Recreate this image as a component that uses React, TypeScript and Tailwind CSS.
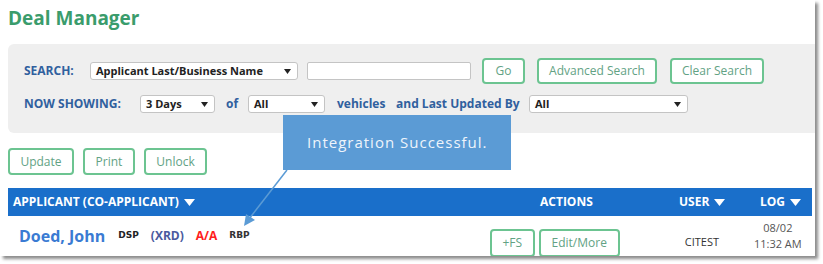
import React from "react";

const font = { fontFamily: '"Open Sans", "Noto Sans", sans-serif' };

function Sel({ w, label }: { w: string; label: string }) {
  return (
    <div
      className={`${w} h-[18px] bg-white border border-[#c4c4c4] rounded-[3px] flex items-center justify-between pl-[5px] pr-[6px] text-[11px] font-bold text-[#222]`}
    >
      <span>{label}</span>
      <svg width="7" height="5" viewBox="0 0 7 5">
        <polygon points="0,0 7,0 3.5,5" fill="#222" />
      </svg>
    </div>
  );
}

function Tri() {
  return (
    <svg width="11" height="7" viewBox="0 0 11 7">
      <polygon points="0,0 11,0 5.5,7" fill="#fff" />
    </svg>
  );
}

function Btn({ w, h = "h-[26px]", children }: { w: string; h?: string; children: React.ReactNode }) {
  return (
    <div
      className={`${w} ${h} border-2 border-[#6cc491] rounded-[4px] bg-white flex items-center justify-center text-[12px] text-[#62a284] shrink-0`}
    >
      {children}
    </div>
  );
}

export default function App() {
  return (
    <div className="w-[823px] h-[264px] bg-white overflow-hidden" style={font}>
      <div className="relative w-[815px] h-[256px] bg-white shadow-[3px_3px_3px_rgba(0,0,0,0.45)] overflow-hidden">
        <div className="pl-2 pt-[5px] text-[19px] font-bold text-[#3a9c6c] leading-[26px]">Deal Manager</div>

        <div className="ml-2 mt-[13px] h-[89px] bg-[#efefef] rounded-l-[6px] pl-4 pt-[14px]">
          <div className="flex items-center h-[26px]">
            <span className="w-[66px] text-[12px] font-bold text-[#30609e]">SEARCH:</span>
            <Sel w="w-[208px]" label="Applicant Last/Business Name" />
            <div className="ml-[9px] w-[164px] h-[18px] bg-white border border-[#c4c4c4] rounded-[2px]" />
            <div className="ml-[11px]">
              <Btn w="w-[43px]">Go</Btn>
            </div>
            <div className="ml-[12px]">
              <Btn w="w-[120px]">Advanced Search</Btn>
            </div>
            <div className="ml-[13px]">
              <Btn w="w-[94px]">Clear Search</Btn>
            </div>
          </div>
          <div className="flex items-center h-[18px] mt-[11px]">
            <span className="w-[116px] text-[12px] font-bold text-[#30609e]">NOW SHOWING:</span>
            <Sel w="w-[75px]" label="3 Days" />
            <span className="ml-[11px] w-[22px] text-[12px] font-bold text-[#30609e]">of</span>
            <Sel w="w-[77px]" label="All" />
            <span className="ml-[12px] w-[59px] text-[12px] font-bold text-[#30609e]">vehicles</span>
            <span className="w-[133px] text-[12px] font-bold text-[#30609e]">and Last Updated By</span>
            <Sel w="w-[159px]" label="All" />
          </div>
        </div>

        <div className="flex gap-[9px] ml-2 mt-[15px]">
          <Btn w="w-[66px]" h="h-[27px]">Update</Btn>
          <Btn w="w-[52px]" h="h-[27px]">Print</Btn>
          <Btn w="w-[63px]" h="h-[27px]">Unlock</Btn>
        </div>

        <div className="ml-2 mt-[13px] w-[804px] h-[28px] bg-[#1a6fca] flex items-center text-white text-[12px] font-bold">
          <span className="ml-[5px] w-[527px] flex items-center gap-[5px]">
            APPLICANT (CO-APPLICANT) <Tri />
          </span>
          <span className="w-[139px]">ACTIONS</span>
          <span className="w-[81px] flex items-center gap-[5px]">
            USER <Tri />
          </span>
          <span className="flex items-center gap-[5px]">
            LOG <Tri />
          </span>
        </div>

        <div className="flex items-start ml-2 h-[40px]">
          <div className="flex items-center h-[20px] mt-[10px] ml-[11px]">
            <span className="text-[16px] font-bold text-[#3a7bd3]">Doed, John</span>
            <span
              className="ml-[13px] text-[9px] font-bold text-[#222]"
              style={{ fontFamily: '"DejaVu Sans", sans-serif' }}
            >
              DSP
            </span>
            <span className="ml-[12px] text-[12px] font-bold text-[#4a5a9e]">(XRD)</span>
            <span className="ml-[12px] text-[12px] font-bold text-[#ff2020]">A/A</span>
            <span
              className="ml-[12px] text-[9px] font-bold text-[#333]"
              style={{ fontFamily: '"DejaVu Sans", sans-serif' }}
            >
              RBP
            </span>
          </div>
          <div className="ml-[240px] mt-[13px] flex gap-[4px]">
            <Btn w="w-[45px]" h="h-[28px]">+FS</Btn>
            <Btn w="w-[81px]" h="h-[28px]">Edit/More</Btn>
          </div>
          <span className="ml-[65px] mt-[18px] text-[11px] text-[#333]">CITEST</span>
          <div className="ml-[35px] mt-[4px] flex flex-col items-center text-[11px] text-[#555] leading-[16px]">
            <span>08/02</span>
            <span>11:32 AM</span>
          </div>
        </div>

        <div className="absolute left-[283px] top-[115px] w-[228px] h-[55px] bg-[#5b9bd5] flex items-center pl-[24px] text-[15px] text-[#eef4fb] tracking-[1px]">
          Integration Successful.
        </div>
        <svg className="absolute left-0 top-0" width="815" height="256">
          <line x1="287" y1="170" x2="249" y2="219" stroke="#5b9bd5" strokeWidth="1.5" />
          <polygon points="244,226 246,214 255,220" fill="#5b9bd5" />
        </svg>
      </div>
    </div>
  );
}
